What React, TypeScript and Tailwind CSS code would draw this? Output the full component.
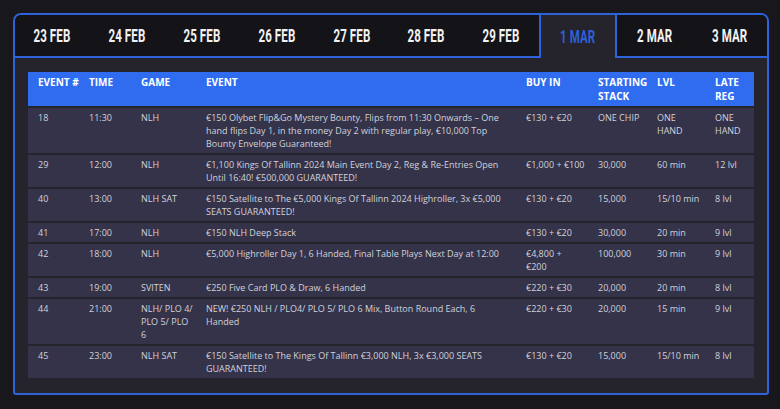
import React from "react";

const tabs = ["23 FEB", "24 FEB", "25 FEB", "26 FEB", "27 FEB", "28 FEB", "29 FEB", "1 MAR", "2 MAR", "3 MAR"];
const ACTIVE = 7;

type Row = string[][];

const headers: string[][] = [
  ["EVENT #"],
  ["TIME"],
  ["GAME"],
  ["EVENT"],
  ["BUY IN"],
  ["STARTING", "STACK"],
  ["LVL"],
  ["LATE", "REG"],
];

const rows: Row[] = [
  [
    ["18"],
    ["11:30"],
    ["NLH"],
    [
      "€150 Olybet Flip&Go Mystery Bounty, Flips from 11:30 Onwards – One",
      "hand flips Day 1, in the money Day 2 with regular play, €10,000 Top",
      "Bounty Envelope Guaranteed!",
    ],
    ["€130 + €20"],
    ["ONE CHIP"],
    ["ONE", "HAND"],
    ["ONE", "HAND"],
  ],
  [
    ["29"],
    ["12:00"],
    ["NLH"],
    ["€1,100 Kings Of Tallinn 2024 Main Event Day 2, Reg & Re-Entries Open", "Until 16:40! €500,000 GUARANTEED!"],
    ["€1,000 + €100"],
    ["30,000"],
    ["60 min"],
    ["12 lvl"],
  ],
  [
    ["40"],
    ["13:00"],
    ["NLH SAT"],
    ["€150 Satellite to The €5,000 Kings Of Tallinn 2024 Highroller, 3x €5,000", "SEATS GUARANTEED!"],
    ["€130 + €20"],
    ["15,000"],
    ["15/10 min"],
    ["8 lvl"],
  ],
  [["41"], ["17:00"], ["NLH"], ["€150 NLH Deep Stack"], ["€130 + €20"], ["30,000"], ["20 min"], ["9 lvl"]],
  [
    ["42"],
    ["18:00"],
    ["NLH"],
    ["€5,000 Highroller Day 1, 6 Handed, Final Table Plays Next Day at 12:00"],
    ["€4,800 +", "€200"],
    ["100,000"],
    ["30 min"],
    ["9 lvl"],
  ],
  [["43"], ["19:00"], ["SVITEN"], ["€250 Five Card PLO & Draw, 6 Handed"], ["€220 + €30"], ["20,000"], ["20 min"], ["8 lvl"]],
  [
    ["44"],
    ["21:00"],
    ["NLH/ PLO 4/", "PLO 5/ PLO", "6"],
    ["NEW! €250 NLH / PLO4/ PLO 5/ PLO 6 Mix, Button Round Each, 6", "Handed"],
    ["€220 + €30"],
    ["20,000"],
    ["15 min"],
    ["9 lvl"],
  ],
  [
    ["45"],
    ["23:00"],
    ["NLH SAT"],
    ["€150 Satellite to The Kings Of Tallinn €3,000 NLH, 3x €3,000 SEATS", "GUARANTEED!"],
    ["€130 + €20"],
    ["15,000"],
    ["15/10 min"],
    ["8 lvl"],
  ],
];

export default function App() {
  return (
    <div className="w-[780px] h-[409px] bg-[#18171c] pt-[13px] pl-[13px]">
      <div className="w-[756px] border-2 border-[#2c62da] rounded-t-[8px] rounded-b-[3px] overflow-hidden bg-[#25242c]">
        <div className="flex h-[43px]">
          {tabs.map((t, i) => (
            <div
              key={t}
              className={
                i === ACTIVE
                  ? "flex-1 flex items-center justify-center bg-[#25242c] border-x-2 border-[#2c62da]"
                  : "flex-1 flex items-center justify-center bg-[#141317] border-b-2 border-[#2c62da]"
              }
            >
              <span
                className={
                  "inline-block scale-x-[0.64] text-[18px] leading-none font-bold tracking-[0.2px] " +
                  (i === ACTIVE ? "text-[#2d60d8]" : "text-[#f2f2f4]")
                }
                style={{ fontFamily: "Roboto, 'Liberation Sans', sans-serif" }}
              >
                {t}
              </span>
            </div>
          ))}
        </div>
        <div className="px-[13px] pt-[14px] pb-[15px]">
          <table
            className="w-full table-fixed"
            style={{ fontFamily: "'Open Sans', 'Liberation Sans', sans-serif" }}
          >
            <colgroup>
              <col className="w-[51px]" />
              <col className="w-[52px]" />
              <col className="w-[65px]" />
              <col className="w-[320px]" />
              <col className="w-[72px]" />
              <col className="w-[59px]" />
              <col className="w-[58px]" />
              <col className="w-[49px]" />
            </colgroup>
            <thead>
              <tr>
                {headers.map((h, i) => (
                  <th
                    key={i}
                    className="bg-[#2f6cf0] text-left align-top pl-[10px] py-[3px] text-[10px] leading-[14px] font-bold text-white"
                  >
                    {h.map((l, j) => (
                      <div key={j} className="whitespace-nowrap">
                        {l}
                      </div>
                    ))}
                  </th>
                ))}
              </tr>
            </thead>
            <tbody>
              {rows.map((r, ri) => (
                <tr key={ri}>
                  {r.map((c, ci) => (
                    <td
                      key={ci}
                      className="bg-[#34334a] border-t-2 border-[#25242c] align-top pl-[10px] py-[3px] text-[9px] leading-[13px] text-[#d2d2da]"
                    >
                      {c.map((l, j) => (
                        <div key={j} className="whitespace-nowrap">
                          {l}
                        </div>
                      ))}
                    </td>
                  ))}
                </tr>
              ))}
            </tbody>
          </table>
        </div>
      </div>
    </div>
  );
}
